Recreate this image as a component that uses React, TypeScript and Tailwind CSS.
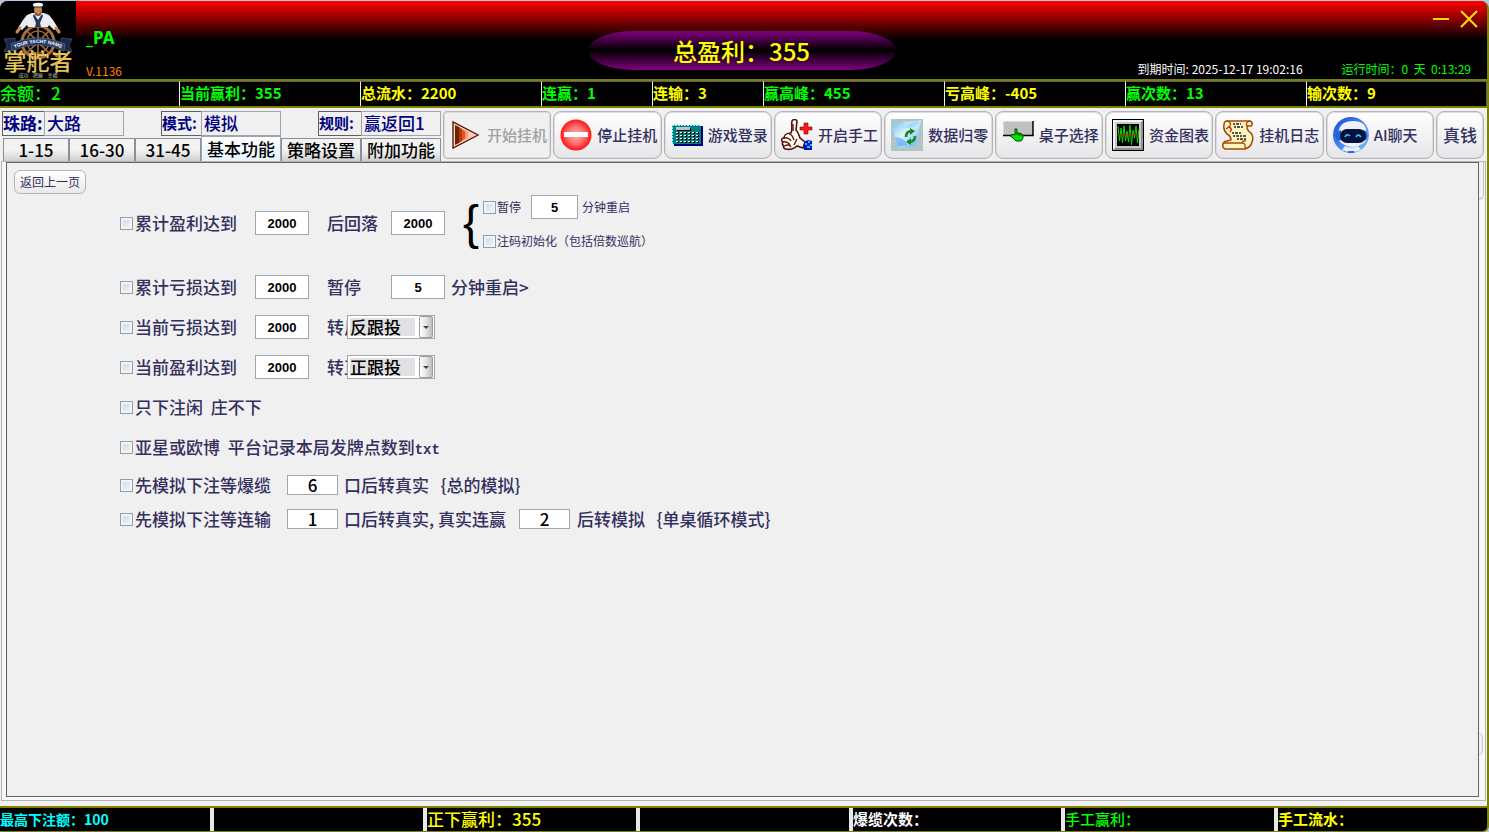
import { useState, type ReactNode } from "react";
import { clsx } from "clsx";

const stats = [
  { label: "余额：", value: "2", tone: "text-[#00ff00]", size: "text-[17px] font-medium" },
  { label: "当前赢利：", value: "355", tone: "text-[#00ff00]", size: "text-[15px] font-bold" },
  { label: "总流水：", value: "2200", tone: "text-[#ffff00]", size: "text-[15px] font-bold" },
  { label: "连赢：", value: "1", tone: "text-[#00ff00]", size: "text-[15px] font-bold" },
  { label: "连输：", value: "3", tone: "text-[#ffff00]", size: "text-[15px] font-bold" },
  { label: "赢高峰：", value: "455", tone: "text-[#00ff00]", size: "text-[15px] font-bold" },
  { label: "亏高峰：", value: "-405", tone: "text-[#ffff00]", size: "text-[15px] font-bold" },
  { label: "赢次数：", value: "13", tone: "text-[#00ff00]", size: "text-[15px] font-bold" },
  { label: "输次数：", value: "9", tone: "text-[#ffff00]", size: "text-[15px] font-bold" },
];

const totals = [
  { text: "最高下注额：100", tone: "text-[#00ffff]", size: "text-sm font-bold" },
  { text: "", tone: "", size: "" },
  { text: "正下赢利：355", tone: "text-[#ffff00]", size: "text-[17px] font-medium" },
  { text: "", tone: "", size: "" },
  { text: "爆缆次数：", tone: "text-white", size: "text-[15px] font-bold" },
  { text: "手工赢利：", tone: "text-[#00ff00]", size: "text-[15px] font-medium" },
  { text: "手工流水：", tone: "text-[#ffff00]", size: "text-[15px] font-bold" },
];

const modes = [
  { label: "珠路:", value: "大路", labelClass: "w-[42px] text-[17px]", boxClass: "w-20" },
  { label: "模式:", value: "模拟", labelClass: "w-10 text-[15px]", boxClass: "w-20" },
  { label: "规则:", value: "赢返回1", labelClass: "w-[43px] text-[15px]", boxClass: "w-20" },
];

const tabs = ["1-15", "16-30", "31-45", "基本功能", "策略设置", "附加功能"];

function Logo() {
  return (
    <svg viewBox="0 0 76 78" className="h-[78px] w-[76px] shrink-0 bg-black" aria-label="掌舵者">
      {/* helm */}
      <g stroke="#a8703c" fill="none">
        <circle cx="38" cy="41" r="16" strokeWidth="3" />
        <circle cx="38" cy="41" r="11" strokeWidth="1.2" />
        <path d="M38 25v32M22 41h32M27 30l22 22M49 30 27 52" strokeWidth="1.6" />
        <path d="M22 52l-3 3M54 52l3 3" strokeWidth="3" strokeLinecap="round" />
      </g>
      {/* sailor */}
      <path d="M32 12 27 14 23 19 18 27l4 2 5-5 1 2h20l1-2 5 5 4-2-5-8-4-5-5-2z" fill="#e9edf2" />
      <path d="M20 27l-3 4M56 27l3 4" stroke="#c98a55" strokeWidth="3" strokeLinecap="round" />
      <path d="M34 13l4 6 4-6 1 2-3 7 1 4h-6l1-4-3-7z" fill="#23365f" />
      <ellipse cx="38" cy="9" rx="4" ry="5" fill="#c98a55" />
      <path d="M33 4c-1-3 11-3 10 0l-1 2h-8z" fill="#fff" />
      <path d="M34 6h8" stroke="#22304f" />
      <path d="M35 11q3 4 6 0v3q-3 2-6 0z" fill="#7b5238" />
      {/* banner */}
      <path d="M4 38l11-1v11l-11 3 3-7zM72 38l-11-1v11l11 3-3-7z" fill="#1a2746" stroke="#5f7191" strokeWidth=".5" />
      <path d="M11 43Q38 30 65 43l-1 7Q38 38 12 50z" fill="#263a68" stroke="#7487a8" strokeWidth=".5" />
      <path id="bannerLine" d="M13 48Q38 36 63 48" fill="none" />
      <text className="fill-white font-['Liberation_Sans'] text-[5px] font-bold">
        <textPath href="#bannerLine" startOffset="50%" textAnchor="middle">YOUR YACHT NAME</textPath>
      </text>
      <text x="38" y="69" textAnchor="middle" className="fill-[#e5c35a] text-[23px] font-medium">掌舵者</text>
      <text x="38" y="76" textAnchor="middle" xmlSpace="preserve" className="fill-[#b9c0b4] text-[5px]">成功    把握    幸福</text>
    </svg>
  );
}

function PlayIcon() {
  return (
    <svg viewBox="0 0 32 32" className="size-8">
      <path d="M3 3v26l25-13z" fill="#ffd9c8" stroke="#5a1c00" strokeWidth="1.4" />
      <path d="M5 6v20l4-2V8z" fill="#6a2200" />
      <path d="M9 8v16l3-2V10z" fill="#b03a10" />
      <path d="M12 10v12l3-2v-8z" fill="#f05020" />
      <path d="M15 11v10l9-5z" fill="#ff9c78" />
      <path d="M18 13v6l6-3z" fill="#ffd0bb" />
    </svg>
  );
}

function StopIcon() {
  return (
    <svg viewBox="0 0 32 32" className="size-8">
      <defs>
        <radialGradient id="stopFill">
          <stop offset="0" stopColor="#ffb0b0" />
          <stop offset=".55" stopColor="#ff7070" />
          <stop offset="1" stopColor="#ff1414" />
        </radialGradient>
      </defs>
      <circle cx="16" cy="16" r="15.5" fill="url(#stopFill)" />
      <path d="M4 13h24v5H4z" fill="#fff" />
    </svg>
  );
}

const keyRows = [13, 16, 19, 22];
const keyCols = [5, 9, 13, 17, 21, 25];

function KeypadIcon() {
  return (
    <svg viewBox="0 0 32 32" className="size-8" shapeRendering="crispEdges">
      <path d="M3 7h29v20H3z" fill="#000080" />
      <path d="M1 6h29v19H1z" fill="#008080" />
      <path d="M1.500 25V6.500H30" fill="none" stroke="#7fffff" strokeDasharray="2 1" />
      <path d="M6 9h14v3H6z" fill="#000" />
      <path d="M5 8h14v3H5z" fill="#c0c0c0" />
      {keyRows.map((y) =>
        keyCols.map((x) => (
          <g key={`${x}-${y}`}>
            <path d={`M${x + 1} ${y + 1}h2v1h-2z`} fill="#000" />
            <path d={`M${x} ${y}h2v1h-2z`} fill="#fff" />
            <path d={`M${x + 2} ${y}h1v2h-1z`} fill="#000" />
          </g>
        ))
      )}
    </svg>
  );
}

function ThumbIcon() {
  return (
    <svg viewBox="0 0 32 32" className="size-8">
      <path
        d="M10 14c2-4 0-9 1-12 1-2 4-2 5 0l-1 9c2 2 3 5 4 8l5 4-2 6-6-2c-3 3-8 4-11 3-2 0-3-2-2-3-2-1-2-3-1-4-2-1-2-4 1-4 0-3 3-5 7-5z"
        fill="#fffdf2" stroke="#4b1010" strokeWidth="1.6"
      />
      <path d="M3 19c3-1 6 1 7 3M2 23c3-1 6 1 7 3M4 27c2-2 5-1 6 1M8 15c3 0 4 3 5 6M16 20l-3 6M12 5v7" fill="none" stroke="#6b1a10" strokeWidth="1.5" />
      <path d="M23 23l4-2 4 1v9h-8z" fill="#0010c8" />
      <path d="M24 24h2v2h-2zM27 22h2v2h-2zM26 27h3v2h-3zM29 25h2v2h-2z" fill="#18c8ff" />
      <path d="M23 4h4v4h4v3h-4v4h-4v-4h-4V8h4z" fill="#f01818" stroke="#900" strokeWidth=".6" />
    </svg>
  );
}

function RecycleIcon() {
  return (
    <svg viewBox="0 0 32 32" className="size-8 bg-[#b2c5c6]">
      <defs>
        <linearGradient id="binFill" x1="0" x2="1" y1="0" y2="1">
          <stop offset="0" stopColor="#65bdf1" />
          <stop offset=".45" stopColor="#dff4ff" />
          <stop offset="1" stopColor="#4faaf0" />
        </linearGradient>
      </defs>
      <path d="M1 5q6 2 12-3 8 2 17-1l-5 25q-8 5-19 2z" fill="url(#binFill)" />
      <path d="M2 6q8 4 14 0t13-4q-4 8-13 7T2 6z" fill="#a5dcfb" />
      <path d="M4 18q9 0 12 8l-10 2z" fill="#4ba3ee" opacity=".6" />
      <g fill="none" stroke="#128a20" strokeWidth="2.600">
        <path d="M15 18q0-6 6-6" />
        <path d="M24 17q0 6-6 6" />
      </g>
      <path d="M19 9l5 3-5 4zM20 19l-5 4 5 3z" fill="#128a20" />
    </svg>
  );
}

function TableIcon() {
  return (
    <svg viewBox="0 0 32 32" className="size-8">
      <path d="M1 2h30v15H1z" fill="#c0c0c0" />
      <path d="M1 17V2h30" fill="none" stroke="#f4f4f4" />
      <path d="M1 16.500h30V2" fill="none" stroke="#000" strokeWidth="1.5" />
      <path d="M13 10q2-1 2 1v3q5 0 6 2 1 3-2 6h-5l-4-4H9v-2q2-1 4 0z" fill="#00e800" stroke="#004800" />
      <path d="M15 13v3M17 14v3M19 15v2" stroke="#004800" />
    </svg>
  );
}

function ChartIcon() {
  return (
    <svg viewBox="0 0 32 32" className="size-8">
      <path d="M0 0h32v32H0z" fill="#000" />
      <path d="M1 1h30v30H1z" fill="#f4f4f4" />
      <path d="M31 1v30H1l3-3h24V4z" fill="#909090" />
      <path d="M3 3h26v26H3z" fill="#c8c8c8" />
      <path d="M5 5h22v22H5z" fill="#000" />
      <path d="M6 7l1.500 15 1.500-13 1.500 15 1.500-17 1.500 15 1.500-10 1.500 11 1.500-17 1.500 20 1.500-15 1.500 8 1.500-12 1.500 17 1.500-14" fill="none" stroke="#00e000" />
      <path d="M5 16h22" stroke="#ff0000" />
    </svg>
  );
}

function ScrollIcon() {
  return (
    <svg viewBox="0 0 32 32" className="size-8">
      <path
        d="M5 2h23q4 2 1 5h-4q0 5 4 7 3 4 1 9-1 5-7 7H3q-3-1-2-5 1-3 4-3l4-1q0-4-4-6-4-4-3-9 0-4 3-4z"
        fill="#fff4c0" stroke="#a04800" strokeWidth="1.5"
      />
      <path d="M5 2q5 1 3 5l-4 3M28 2q-5 1-3 5M2 24h18q4 0 3 5M20 24q1-3 4-2" fill="none" stroke="#a04800" strokeWidth="1.3" />
      <path d="M11 5h8M12 8h9M10 14h9M11 17h13M15 20h10" stroke="#222" strokeWidth="1.4" strokeDasharray="2 1 3 1" />
      <path d="M7 8q4 2 1 5" fill="none" stroke="#e02020" strokeWidth="1.5" />
    </svg>
  );
}

function RobotIcon() {
  return (
    <svg viewBox="0 0 36 36" className="size-9">
      <defs>
        <linearGradient id="robotRing" x1="0" x2="1" y1="0" y2="1">
          <stop offset="0" stopColor="#1746d8" />
          <stop offset="1" stopColor="#7cc8ff" />
        </linearGradient>
      </defs>
      <circle cx="18" cy="18" r="18" fill="url(#robotRing)" />
      <path d="M5 19Q5 4 20 4t13 14l-1 7q-6 5-13 5T5 23z" fill="#eef3fb" />
      <path d="M12 29q7 3 13 0l3 4q-10 4-19 0z" fill="#e9eef6" />
      <path d="M3 15q-2 6 2 9l4-1-1-10zM33 14q3 5 0 9l-3-1V13z" fill="#2164d8" />
      <rect x="7" y="12" width="26" height="14" rx="7" fill="#06113d" />
      <path d="M12 20q2-4 5-1M23 20q2-4 5 0" fill="none" stroke="#36cfff" strokeWidth="1.600" />
      <path d="M15 34h6v2h-6z" fill="#1f6df0" />
    </svg>
  );
}

const actions = [
  { label: "开始挂机", icon: <PlayIcon />, disabled: true },
  { label: "停止挂机", icon: <StopIcon /> },
  { label: "游戏登录", icon: <KeypadIcon /> },
  { label: "开启手工", icon: <ThumbIcon /> },
  { label: "数据归零", icon: <RecycleIcon /> },
  { label: "桌子选择", icon: <TableIcon /> },
  { label: "资金图表", icon: <ChartIcon /> },
  { label: "挂机日志", icon: <ScrollIcon /> },
  { label: "AI聊天", icon: <RobotIcon /> },
];

function Check({ children, small, className }: { children: ReactNode; small?: boolean; className?: string }) {
  return (
    <label className={clsx("flex shrink-0 items-center whitespace-pre", small ? "gap-px text-xs font-normal" : "gap-0.5", className)}>
      <input
        type="checkbox"
        className="size-[13px] shrink-0 appearance-none border border-[#8e9fae] bg-linear-to-br from-[#cbd7e4] to-[#f3f7fb] shadow-[inset_0_0_0_2px_#f0f4f5] checked:bg-[#35609a]"
      />
      {children}
    </label>
  );
}

function NumBox({ label, value, className }: { label: string; value: string; className: string }) {
  return (
    <input
      type="text"
      aria-label={label}
      defaultValue={value}
      className={clsx("shrink-0 border border-[#a0a8ae] bg-white text-center text-black", className)}
    />
  );
}

const big = "h-6 w-[54px] font-['Liberation_Sans'] text-[13px] font-bold";
const flat = "h-5 w-[51px] text-[17px] font-medium";

function FollowSelect({ label, value }: { label: string; value: string }) {
  return (
    <div className="flex h-6 w-[88px] shrink-0 items-center border border-[#a0a8ae] bg-white pl-0.5">
      <select
        aria-label={label}
        defaultValue={value}
        className="h-[18px] w-[65px] appearance-none bg-[#e1e1e4] text-[17px] leading-[18px] font-medium text-black"
      >
        <option>正跟投</option>
        <option>反跟投</option>
      </select>
      <span className="mr-px ml-auto flex h-[22px] w-[14px] items-center justify-center rounded-xs border border-[#9a9a9e] bg-linear-to-r from-white via-[#e4e4e6] to-[#bdbdc1]">
        <svg viewBox="0 0 6 3" className="h-[3px] w-[6px]">
          <path d="M0 0h6L3 3z" fill="#444" />
        </svg>
      </span>
    </div>
  );
}

function SettingsPanel() {
  return (
    <div className="flex flex-1 flex-col items-start overflow-hidden border border-[#606466] bg-[#f0f0f0] px-[7px] pt-[7px]">
      <button type="button" className="h-6 w-[72px] rounded-md border border-[#b4b4b8] bg-linear-to-b from-white to-[#e9e9eb] text-xs text-[#332f5f]">
        返回上一页
      </button>
      <div className="mt-px ml-[106px] text-[17px] font-medium whitespace-pre text-[#332f5f]">
        <div className="mb-4 flex h-14 items-center">
          <Check className="w-[135px]">累计盈利达到</Check>
          <NumBox label="累计盈利" value="2000" className={big} />
          <span className="ml-[18px] w-16">后回落</span>
          <NumBox label="回落" value="2000" className={big} />
          <span className="ml-[18px] w-5 font-['Liberation_Sans'] text-5xl leading-[56px] text-black">{"{"}</span>
          <div className="flex h-14 flex-col justify-between">
            <div className="flex h-6 items-center text-xs font-normal">
              <Check small className="w-12">暂停</Check>
              <NumBox label="暂停分钟" value="5" className="h-6 w-[47px] font-['Liberation_Sans'] text-[13px] font-bold" />
              <span className="ml-1">分钟重启</span>
            </div>
            <Check small className="h-5">注码初始化（包括倍数巡航）</Check>
          </div>
        </div>

        <div className="flex h-10 items-center">
          <Check className="w-[135px]">累计亏损达到</Check>
          <NumBox label="累计亏损" value="2000" className={big} />
          <span className="ml-[18px] w-16">暂停</span>
          <NumBox label="暂停分钟" value="5" className={big} />
          <span className="ml-1.5">分钟重启&gt;</span>
        </div>

        <div className="flex h-10 items-center">
          <Check className="w-[135px]">当前亏损达到</Check>
          <NumBox label="当前亏损" value="2000" className={big} />
          <span className="ml-[18px] w-5 overflow-hidden">转反</span>
          <FollowSelect label="亏损后转" value="反跟投" />
        </div>

        <div className="flex h-10 items-center">
          <Check className="w-[135px]">当前盈利达到</Check>
          <NumBox label="当前盈利" value="2000" className={big} />
          <span className="ml-[18px] w-5 overflow-hidden">转正</span>
          <FollowSelect label="盈利后转" value="正跟投" />
        </div>

        <Check className="h-10">只下注闲  庄不下</Check>
        <Check className="h-10">
          <span>
            亚星或欧博  平台记录本局发牌点数到<span className="font-['Liberation_Mono'] text-sm font-bold">txt</span>
          </span>
        </Check>

        <div className="flex h-9 items-center">
          <Check className="w-[167px]">先模拟下注等爆缆</Check>
          <NumBox label="爆缆口数" value="6" className={flat} />
          <span className="ml-1.5">口后转真实   {"{总的模拟}"}</span>
        </div>

        <div className="flex h-8 items-center">
          <Check className="w-[167px]">先模拟下注等连输</Check>
          <NumBox label="连输口数" value="1" className={flat} />
          <span className="ml-1.5 w-[175px]">口后转真实, 真实连赢</span>
          <NumBox label="连赢口数" value="2" className={flat} />
          <span className="ml-[7px]">后转模拟   {"{单桌循环模式}"}</span>
        </div>
      </div>
    </div>
  );
}

export default function App() {
  const [tab, setTab] = useState("基本功能");

  return (
    <div className="bg-[#b4c9df] pt-px font-['Noto_Sans_CJK_SC',sans-serif]">
      <div className="flex min-h-[calc(100vh-1px)] flex-col overflow-hidden rounded-t-lg rounded-br-md border-r-2 border-b border-[#808000] bg-[#f0f0f0]">
        <header className="grid h-[78px] grid-cols-[1fr_308px_1fr] bg-black bg-linear-to-b/srgb from-[#ff0000] to-black to-50% pr-1">
          <div className="flex">
            <Logo />
            <div className="flex flex-col justify-between pt-[25px] pl-2.5">
              <span className="font-['Noto_Sans'] text-[17px] leading-6 font-bold text-[#00ff00]">_PA</span>
              <span className="text-xs leading-4 text-[#ff8000]">V.1136</span>
            </div>
          </div>
          <div className="mt-[30px] flex h-[39px] items-center justify-center rounded-[46px/50%] bg-linear-to-b/srgb from-[#800080] via-black to-[#800080] text-2xl font-medium text-[#ffff00]">
            总盈利：355
          </div>
          <div className="flex flex-col items-end justify-between pb-0.5">
            <div className="mt-2 mr-1 flex gap-2 text-[#ffe000]">
              <button type="button" aria-label="最小化">
                <svg viewBox="0 0 20 20" className="size-5">
                  <path d="M2 10h16" stroke="currentColor" strokeWidth="2" />
                </svg>
              </button>
              <button type="button" aria-label="关闭">
                <svg viewBox="0 0 20 20" className="size-5">
                  <path d="M2 2l16 16M18 2L2 18" stroke="currentColor" strokeWidth="2" />
                </svg>
              </button>
            </div>
            <div className="mr-3 flex gap-8 text-xs leading-4 whitespace-nowrap">
              <span className="w-[172px] text-white">到期时间: 2025-12-17  19:02:16</span>
              <span className="whitespace-pre text-[#00ff00]">运行时间：0  天  0:13:29</span>
            </div>
          </div>
        </header>

        <div className="grid grid-cols-[180fr_181fr_181fr_111fr_111fr_181fr_181fr_181fr_180fr] border-y-2 border-[#808000] bg-black">
          {stats.map((s) => (
            <div
              key={s.label}
              className={clsx("h-[25px] border-t border-r border-t-[#606060] border-r-[#f0f0f0] leading-[22px] whitespace-nowrap last:border-r-[#606060]", s.tone, s.size)}
            >
              {s.label}
              {s.value}
            </div>
          ))}
        </div>

        <div className="flex pt-[3px]">
          <div className="flex w-[441px] shrink-0 flex-col">
            <div className="flex justify-between pl-0.5 font-bold text-[#000080]">
              {modes.map((m) => (
                <div key={m.label} className="flex h-[25px] leading-[22px] whitespace-nowrap">
                  <span className={clsx("border border-r-0 border-[#606060]", m.labelClass)}>{m.label}</span>
                  <span className={clsx("border border-[#a0a4ac] pl-0.5 text-[17px] font-medium", m.boxClass)}>{m.value}</span>
                </div>
              ))}
            </div>
            <div role="tablist" className="flex h-[25px] items-end pl-[3px]">
              {tabs.map((t, i) => (
                <button
                  key={t}
                  type="button"
                  role="tab"
                  aria-selected={tab === t}
                  onClick={() => setTab(t)}
                  className={clsx(
                    "border border-b-0 text-[17px] font-medium whitespace-nowrap text-black",
                    i < 3 ? "w-[66px]" : "w-20",
                    tab === t
                      ? "h-[25px] border-[#a0a4ac] bg-linear-to-b from-white to-[#e6f4fd] leading-6"
                      : "h-[23px] border-[#8c8f98] bg-linear-to-b from-[#f3f3f3] from-50% to-[#cfcfcf] leading-[22px]"
                  )}
                >
                  {t}
                </button>
              ))}
            </div>
          </div>
          <div className="flex flex-1 gap-0.5 pr-[3px] pl-0.5">
            {actions.map((a) => (
              <button
                key={a.label}
                type="button"
                disabled={a.disabled}
                className="flex h-12 flex-1 items-center gap-[5px] rounded-lg border border-[#b4b4b8] bg-linear-to-b from-white to-[#e6e6e9] pl-1.5 text-[15px] font-medium whitespace-nowrap text-[#332f5f] shadow-[inset_0_0_0_1px_#dcdcdf] disabled:rounded-sm disabled:from-[#f0f0f0] disabled:to-[#f0f0f0] disabled:text-[#a0a0a0]"
              >
                {a.icon}
                {a.label}
              </button>
            ))}
            <button type="button" className="h-12 w-12 rounded-lg border border-[#b4b4b8] bg-linear-to-b from-white to-[#e6e6e9] text-[17px] font-medium text-[#332f5f] shadow-[inset_0_0_0_1px_#dcdcdf]">
              真钱
            </button>
          </div>
        </div>

        <main className="relative mx-px mb-[5px] flex flex-1 flex-col border border-[#b4b4b4] bg-[#f8f8f8] pr-1.5 pb-[3px] pl-1">
          {/* edges of the controls tucked behind the page */}
          <span className="absolute top-0 right-px h-[38px] w-3 rounded-br-md border border-t-0 border-[#c0c0c4] bg-[#f4f4f6]" />
          <span className="absolute right-0.5 bottom-11 h-6 w-3 rounded-r-md border border-[#c8c8cc] bg-[#f4f4f6]" />
          <div className="relative flex flex-1 flex-col">
            <SettingsPanel />
          </div>
        </main>

        <footer className="grid grid-cols-[214fr_213fr_213fr_213fr_212fr_213fr_209fr] border-t-2 border-[#808000] bg-black">
          {totals.map((t, i) => (
            <div key={i} className={clsx("h-[23px] border-r-4 border-[#e8e8e8] leading-[22px] whitespace-nowrap last:border-r-0", t.tone, t.size)}>
              {t.text}
            </div>
          ))}
        </footer>
      </div>
    </div>
  );
}
